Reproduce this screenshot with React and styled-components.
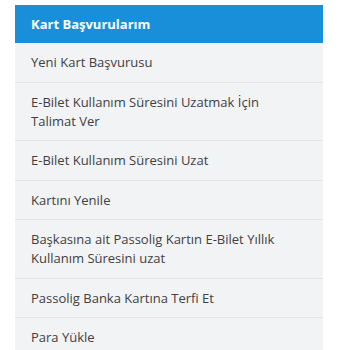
import React from "react";
import styled, { createGlobalStyle } from "styled-components";

const Global = createGlobalStyle`
  html, body { margin: 0; padding: 0; background: #ffffff; }
  body { font-family: "Open Sans", "Noto Sans", sans-serif; }
`;

const Page = styled.div`
  padding: 5px 0 0 15px;
`;

const Panel = styled.nav`
  width: 308px;
  background: #f2f3f5;
`;

const Header = styled.div`
  background: #1a8fd9;
  color: #ffffff;
  font-weight: 700;
  font-size: 13px;
  line-height: 19px;
  padding: 9.5px 16px 9.5px;
`;

const List = styled.ul`
  list-style: none;
  margin: 0;
  padding: 0;
`;

const Item = styled.li`
  padding: 10px 16px 9.5px;
  font-size: 13px;
  line-height: 19px;
  color: #404042;
  border-bottom: 1px solid ${(p) => (p.$last ? "transparent" : "#e2e4e7")};
`;

const items = [
  "Yeni Kart Başvurusu",
  "E-Bilet Kullanım Süresini Uzatmak İçin Talimat Ver",
  "E-Bilet Kullanım Süresini Uzat",
  "Kartını Yenile",
  "Başkasına ait Passolig Kartın E-Bilet Yıllık Kullanım Süresini uzat",
  "Passolig Banka Kartına Terfi Et",
  "Para Yükle",
];

export default function App() {
  return (
    <>
      <Global />
      <Page>
        <Panel>
          <Header>Kart Başvurularım</Header>
          <List>
            {items.map((t, i) => (
              <Item key={t} $last={i === items.length - 1}>
                {t}
              </Item>
            ))}
          </List>
        </Panel>
      </Page>
    </>
  );
}
